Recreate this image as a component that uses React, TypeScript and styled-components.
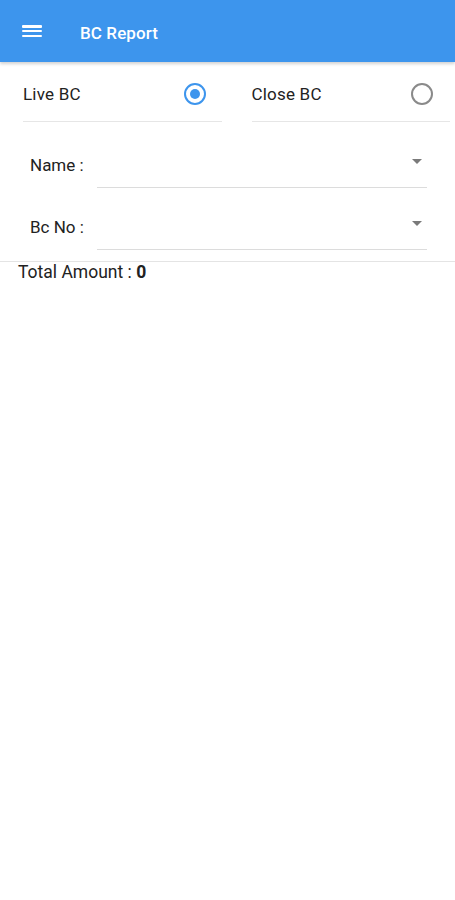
import React, {useState} from 'react';
import styled, {createGlobalStyle} from 'styled-components'

const GlobalStyle = createGlobalStyle`
  html, body {
    margin: 0;
    padding: 0;
    background: #ffffff;
    font-family: Roboto, 'Noto Sans', sans-serif;
  }
`

const Page = styled.div`
  width: 455px;
  min-height: 900px;
  background: #fff;
`

const AppBar = styled.header`
  display: flex;
  align-items: center;
  height: 62px;
  padding-left: 22px;
  box-sizing: border-box;
  background-color: #3d95ed;
  box-shadow: 0 2px 3px rgba(0, 0, 0, 0.18);
  color: #fff;
`

const MenuButton = styled.div`
  display: flex;
  flex-direction: column;
  justify-content: space-between;
  width: 20px;
  height: 12px;

  span {
    display: block;
    height: 2.5px;
    background: #fff;
    border-radius: 1px;
  }
`

const Title = styled.h1`
  margin: 3px 0 0 38px;
  font-size: 17px;
  font-weight: 500;
  letter-spacing: 0.1px;
`

const RadioRow = styled.div`
  display: flex;
  padding: 0 5px 0 23px;
  gap: 30px;
`

const RadioItem = styled.label`
  flex: 1;
  display: flex;
  align-items: flex-end;
  justify-content: space-between;
  height: 60px;
  box-sizing: border-box;
  padding-bottom: 17px;
  border-bottom: 1.5px solid #e6e6e6;
  font-size: 17px;
  line-height: 20px;
  letter-spacing: 0.2px;
  color: #222;
  cursor: pointer;
`

const RadioCircle = styled.span<{checked: boolean}>`
  width: 18px;
  height: 18px;
  border-radius: 50%;
  border: 2px solid ${p => p.checked ? '#3d95ed' : '#8a8a8a'};
  display: flex;
  align-items: center;
  justify-content: center;
  margin-right: ${p => p.checked ? '16px' : '17px'};
  margin-bottom: -1px;

  &::after {
    content: '';
    width: 10px;
    height: 10px;
    border-radius: 50%;
    background: ${p => p.checked ? '#3d95ed' : 'transparent'};
  }
`

const Fields = styled.div`
  padding-top: 4px;
`

const FieldRow = styled.div`
  display: flex;
  align-items: flex-end;
  padding: 0 28px 0 30px;
  height: 62px;
`

const FieldLabel = styled.span`
  width: 67px;
  font-size: 17px;
  line-height: 20px;
  color: #222;
  margin-bottom: 13px;
`

const Select = styled.div`
  flex: 1;
  height: 40px;
  display: flex;
  align-items: center;
  justify-content: flex-end;
  border-bottom: 1.5px solid #dcdcdc;
  padding-right: 5px;
`

const Caret = styled.span`
  width: 0;
  height: 0;
  border-left: 5px solid transparent;
  border-right: 5px solid transparent;
  border-top: 5px solid #7a7a7a;
  margin-top: -12px;
`

const Divider = styled.div`
  height: 1px;
  background: #e4e4e4;
  margin-top: 11px;
`

const Total = styled.p`
  margin: 0 0 0 18px;
  font-size: 17.5px;
  line-height: 20px;
  color: #222;

  b {
    font-weight: 700;
  }
`

const App = () => {
  const [mode, setMode] = useState("live");

  return (
    <Page>
      <GlobalStyle/>
      <AppBar>
        <MenuButton><span/><span/><span/></MenuButton>
        <Title>BC Report</Title>
      </AppBar>
      <RadioRow>
        <RadioItem onClick={() => setMode("live")}>
          Live BC
          <RadioCircle checked={mode === "live"}/>
        </RadioItem>
        <RadioItem onClick={() => setMode("close")}>
          Close BC
          <RadioCircle checked={mode === "close"}/>
        </RadioItem>
      </RadioRow>
      <Fields>
        <FieldRow>
          <FieldLabel>Name :</FieldLabel>
          <Select><Caret/></Select>
        </FieldRow>
        <FieldRow>
          <FieldLabel>Bc No :</FieldLabel>
          <Select><Caret/></Select>
        </FieldRow>
      </Fields>
      <Divider/>
      <Total>Total Amount : <b>0</b></Total>
    </Page>
  );
}

export default App;
